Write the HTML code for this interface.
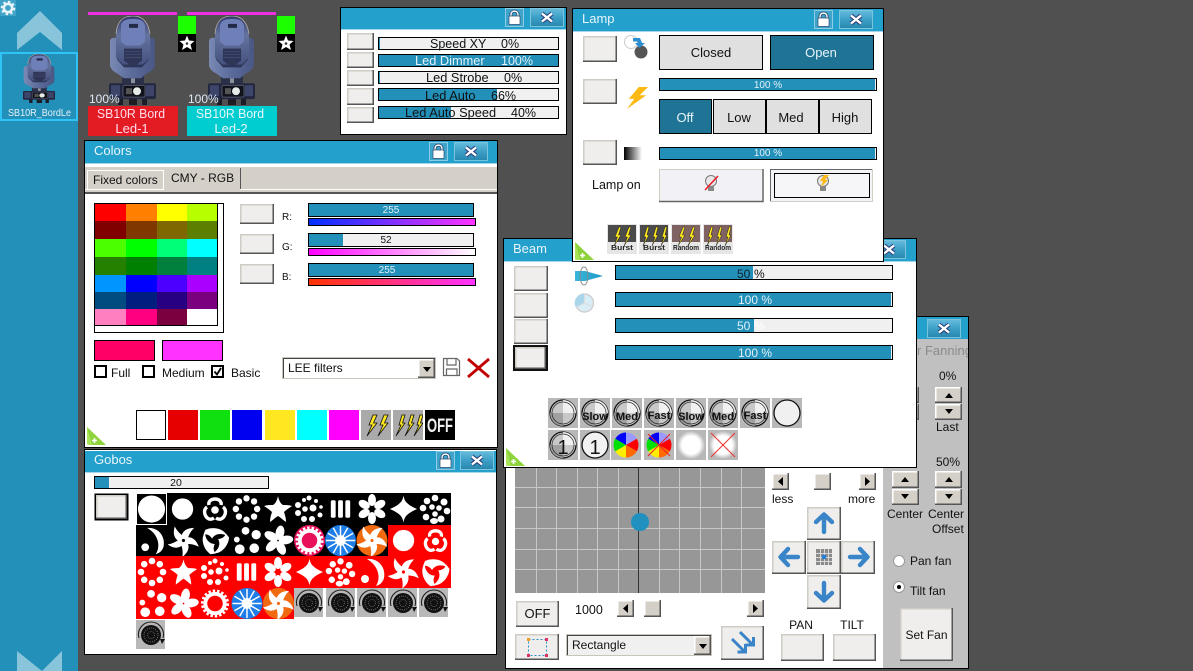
<!DOCTYPE html>
<html><head><meta charset="utf-8"><style>
html,body{margin:0;padding:0;background:#505050}
svg{display:block}
text{font-family:"Liberation Sans",sans-serif;font-size:12px;fill:#111}
rect.e,rect.k,rect.w{shape-rendering:crispEdges}
.k{stroke:#000;fill:#f0f0f0}
.w{stroke:#000;fill:#fff}
.f{fill:#2290b9}
.m{text-anchor:middle}
.t{font-size:13px;fill:#e8f5fb}
.s{font-size:10px}
.l{fill:#e4f1f7}
.bb{font-size:7.500px;font-weight:bold;fill:#222}
.dl{font-weight:bold;font-size:11px}
</style></head><body>
<svg xmlns="http://www.w3.org/2000/svg" width="1193" height="671" viewBox="0 0 1193 671">
<defs>
<linearGradient id="gx" x1="0" y1="0" x2="0" y2="1"><stop offset="0" stop-color="#66bcdc"/><stop offset=".5" stop-color="#3d9fc6"/><stop offset="1" stop-color="#2786ae"/></linearGradient>
<linearGradient id="gh" x1="0" y1="0" x2="0" y2="1"><stop offset="0" stop-color="#333d6c"/><stop offset=".4" stop-color="#64739f"/><stop offset="1" stop-color="#46527f"/></linearGradient>
<linearGradient id="gy" x1="0" y1="0" x2="1" y2="0"><stop offset="0" stop-color="#7a8ab4"/><stop offset=".5" stop-color="#5a6a9a"/><stop offset="1" stop-color="#4a5784"/></linearGradient>
<linearGradient id="gr" x1="0" y1="0" x2="1" y2="0"><stop offset="0" stop-color="#0030ff"/><stop offset="1" stop-color="#ff33ff"/></linearGradient>
<linearGradient id="gg" x1="0" y1="0" x2="1" y2="0"><stop offset="0" stop-color="#ff00ff"/><stop offset="1" stop-color="#ffffff"/></linearGradient>
<linearGradient id="gb" x1="0" y1="0" x2="1" y2="0"><stop offset="0" stop-color="#ff3300"/><stop offset="1" stop-color="#ff33ff"/></linearGradient>
<linearGradient id="gk" x1="0" y1="0" x2="1" y2="0"><stop offset="0" stop-color="#000"/><stop offset="1" stop-color="#fff"/></linearGradient>
<linearGradient id="gc" x1="0" y1="0" x2="1" y2="0"><stop offset="0" stop-color="#38b6d8"/><stop offset="1" stop-color="#1f9ac6"/></linearGradient>
<radialGradient id="gw"><stop offset=".65" stop-color="#fff"/><stop offset="1" stop-color="#b8b8b8"/></radialGradient>

<symbol id="b" viewBox="0 0 100 100" preserveAspectRatio="none"><rect width="100" height="100" fill="#efeeec"/><path d="M100 0H0V100" fill="none" stroke="#cfccc5" stroke-width="3" vector-effect="non-scaling-stroke"/><path d="M100 0V100H0" fill="none" stroke="#555" stroke-width="3" vector-effect="non-scaling-stroke"/></symbol>
<symbol id="c" viewBox="0 0 100 100" preserveAspectRatio="none"><rect width="100" height="100" fill="#d4d0c8"/><path d="M100 0H0V100" fill="none" stroke="#fff" stroke-width="3" vector-effect="non-scaling-stroke"/><path d="M100 0V100H0" fill="none" stroke="#555" stroke-width="3" vector-effect="non-scaling-stroke"/></symbol>

<symbol id="lk" viewBox="0 0 19 19"><rect x=".5" y=".5" width="18" height="18" fill="#3ea4cb" stroke="#8fcbe2"/><path d="M6 9V6.500C6 2 13 2 13 6.500V9" fill="none" stroke="#2c4a70" stroke-width="3"/><path d="M6 9V6.500C6 2 13 2 13 6.500V9" fill="none" stroke="#fff" stroke-width="1.400"/><rect x="4" y="8" width="11" height="8.500" rx="1" fill="#fff" stroke="#2c4a70" stroke-width=".7"/></symbol>
<symbol id="xb" viewBox="0 0 34 19"><rect x=".5" y=".5" width="33" height="18" fill="url(#gx)" stroke="#7cc4de"/><path d="M12 5.500L22 13.500M22 5.500L12 13.500" stroke="#2c3f7c" stroke-width="4.400"/><path d="M12 5.500L22 13.500M22 5.500L12 13.500" stroke="#fff" stroke-width="2.400"/></symbol>

<symbol id="fx" viewBox="0 0 47 90" preserveAspectRatio="none">
<rect x="9" y="83" width="5" height="7" fill="#1a1c28"/><rect x="33" y="83" width="5" height="7" fill="#1a1c28"/><rect x="20" y="84" width="8" height="6" fill="#1c1c22"/>
<rect x="13" y="59" width="22" height="9" fill="#2a3048"/>
<path d="M1 26Q1 22 5 22H41Q46 22 46 26V50Q45 55 38 58L32 63H15L8 58Q2 55 1 50Z" fill="url(#gy)"/>
<path d="M8 24H40V44L33 52H15L8 44Z" fill="#2e3658"/>
<path d="M7 42V18C8 5 14 0 24 0C33 0 39 5 41 18V42L34 49H14Z" fill="url(#gh)"/>
<path d="M7 18C8 5 14 0 24 0C33 0 39 5 41 18" fill="none" stroke="#b5ad9e" stroke-width=".8"/>
<path d="M12 10C13 4 18 3 24 3C30 3 35 4 36 10V26L31 30H17L12 26Z" fill="#6f80b8"/>
<rect x="20" y="8" width="9" height="4" fill="#232a48"/><path d="M15 33H33V45L28 49H20L15 45Z" fill="#2f3556"/>
<path d="M16 36H32M16 39H32M16 42H32" stroke="#434a70"/>
<path d="M22 63H26V68H22Z" fill="#8a8f9c"/>
<rect x="0" y="68" width="47" height="16" rx="2" fill="#232840"/><rect x="2" y="70" width="9" height="11" fill="#3d456a"/><rect x="37" y="70" width="8" height="11" fill="#3d456a"/>
<rect x="14" y="70" width="22" height="12" rx="2" fill="#11131c" stroke="#6a6f84" stroke-width=".7"/><rect x="17" y="73" width="6" height="6" fill="#555"/><circle cx="28" cy="76" r="4" fill="#e6ece8"/>
</symbol>

<symbol id="st" viewBox="0 0 18 18"><rect width="18" height="18" fill="#000"/><path d="M9 1.500L11 6.500L16.500 7L12.500 10.500L14 16L9 13L4 16L5.500 10.500L1.500 7L7 6.500Z" fill="#fff"/><circle cx="9" cy="9.500" r="1.300" fill="#333"/></symbol>

<symbol id="g1" viewBox="0 0 32 32"><circle cx="16" cy="16" r="14" fill="#fff"/></symbol>
<symbol id="g2" viewBox="0 0 32 32"><circle cx="15" cy="16" r="11" fill="#fff"/></symbol>
<symbol id="g3" viewBox="0 0 32 32"><g fill="none" stroke="#fff" stroke-width="3.400"><path d="M10 12C8 4 24 4 22 12M8 14C2 18 8 30 15 25M24 14C30 18 24 30 17 25"/></g><circle cx="16" cy="17" r="3.800" fill="#fff"/></symbol>
<symbol id="g4" viewBox="0 0 32 32"><g fill="#fff"><circle cx="27" cy="16" r="3.300"/><circle cx="23.800" cy="23.800" r="3.300"/><circle cx="16" cy="27" r="3.300"/><circle cx="8.200" cy="23.800" r="3.300"/><circle cx="5" cy="16" r="3.300"/><circle cx="8.200" cy="8.200" r="3.300"/><circle cx="16" cy="5" r="3.300"/><circle cx="23.800" cy="8.200" r="3.300"/></g></symbol>
<symbol id="g5" viewBox="0 0 32 32"><path d="M16 3C17 8 19 11 21 12C24 12 27 12 30 13C27 15 24 17 22 19C23 22 24 25 24 29C21 27 18 24 16 23C14 24 11 27 8 29C8 25 9 22 10 19C8 17 5 15 2 13C5 12 8 12 11 12C13 11 15 8 16 3Z" fill="#fff"/></symbol>
<symbol id="g6" viewBox="0 0 32 32"><g fill="#fff"><circle cx="16" cy="5" r="2.500"/><circle cx="23" cy="8" r="2"/><circle cx="28" cy="14" r="1.800"/><circle cx="27" cy="22" r="2.500"/><circle cx="19" cy="26" r="3"/><circle cx="11" cy="26" r="3"/><circle cx="5" cy="20" r="3"/><circle cx="5" cy="12" r="3"/><circle cx="11" cy="7" r="2"/><circle cx="20" cy="15" r="3.500"/><circle cx="12" cy="16" r="2.800"/></g></symbol>
<symbol id="g7" viewBox="0 0 32 32"><g fill="#fff"><rect x="6" y="7" width="5" height="18" rx="1.500"/><rect x="13.500" y="7" width="5" height="18" rx="1.500"/><rect x="21" y="7" width="5" height="18" rx="1.500"/></g></symbol>
<symbol id="g8" viewBox="0 0 32 32"><g fill="#fff"><ellipse cx="16" cy="7" rx="4" ry="6"/><ellipse cx="16" cy="7" rx="4" ry="6" transform="rotate(60 16 16)"/><ellipse cx="16" cy="7" rx="4" ry="6" transform="rotate(120 16 16)"/><ellipse cx="16" cy="7" rx="4" ry="6" transform="rotate(180 16 16)"/><ellipse cx="16" cy="7" rx="4" ry="6" transform="rotate(240 16 16)"/><ellipse cx="16" cy="7" rx="4" ry="6" transform="rotate(300 16 16)"/></g></symbol>
<symbol id="g9" viewBox="0 0 32 32"><path d="M16 2C17 8 19 11 30 16C19 21 17 24 16 30C15 24 13 21 2 16C13 11 15 8 16 2Z" fill="#fff"/><circle cx="16" cy="16" r="7" fill="#fff"/></symbol>
<symbol id="g10" viewBox="0 0 32 32"><g fill="#fff"><circle cx="16" cy="5" r="3.300"/><circle cx="25" cy="9" r="3.500"/><circle cx="28" cy="18" r="3.300"/><circle cx="22" cy="26" r="3.500"/><ellipse cx="15" cy="28" rx="4" ry="3"/><circle cx="7" cy="24" r="3.300"/><circle cx="4" cy="15" r="3.300"/><circle cx="8" cy="8" r="3.300"/><circle cx="13" cy="14" r="2.800"/><circle cx="20" cy="15" r="2.800"/><circle cx="16" cy="21" r="2.800"/></g></symbol>
<symbol id="g11" viewBox="0 0 32 32"><path d="M11 3C22 2 30 11 28 22C27 26 24 29 20 30C25 22 23 10 11 3Z" fill="#fff"/><circle cx="9" cy="23" r="4" fill="#fff"/></symbol>
<symbol id="g12" viewBox="0 0 32 32"><g fill="#fff"><path id="a5" d="M14 15C13 9 17 3 27 3C23 7 21 11 20 16C18 14 16 14 14 15Z"/><use href="#a5" transform="rotate(72 16 16)"/><use href="#a5" transform="rotate(144 16 16)"/><use href="#a5" transform="rotate(216 16 16)"/><use href="#a5" transform="rotate(288 16 16)"/></g></symbol>
<symbol id="g13" viewBox="0 0 32 32"><g fill="#fff"><path id="a3" d="M6 5C14 1 26 4 28 11C22 8 16 9 13 14C11 11 8 9 4 10Z"/><use href="#a3" transform="rotate(120 16 16)"/><use href="#a3" transform="rotate(240 16 16)"/></g></symbol>
<symbol id="g14" viewBox="0 0 32 32"><g fill="#fff"><circle cx="15" cy="6" r="4"/><circle cx="26" cy="10" r="4.800"/><circle cx="24" cy="24" r="5"/><circle cx="9" cy="25" r="5"/><circle cx="6" cy="15" r="3"/></g></symbol>
<symbol id="g15" viewBox="0 0 32 32"><g fill="#fff"><ellipse id="p5" cx="18" cy="8" rx="4.500" ry="7.500" transform="rotate(10 18 8)"/><use href="#p5" transform="rotate(72 16 16)"/><use href="#p5" transform="rotate(144 16 16)"/><use href="#p5" transform="rotate(216 16 16)"/><use href="#p5" transform="rotate(288 16 16)"/></g></symbol>
<symbol id="g16" viewBox="0 0 32 32"><circle cx="16" cy="16" r="16" fill="#e8105a"/><circle cx="16" cy="16" r="10" fill="none" stroke="#fff" stroke-width="4"/><circle cx="16" cy="16" r="13" fill="none" stroke="#fff" stroke-width="3" stroke-dasharray="2.500 2"/></symbol>
<symbol id="g19" viewBox="0 0 32 32"><circle cx="16" cy="16" r="10" fill="none" stroke="#fff" stroke-width="4"/><circle cx="16" cy="16" r="13" fill="none" stroke="#fff" stroke-width="3" stroke-dasharray="2.500 2"/></symbol>
<symbol id="g17" viewBox="0 0 32 32"><circle cx="16" cy="16" r="16" fill="#1e7de6"/><g stroke="#fff" stroke-width="1.500"><path d="M16 1V31M1 16H31M8.500 3L23.500 29M3 8.500L29 23.500M3 23.500L29 8.500M8.500 29L23.500 3"/></g><circle cx="16" cy="16" r="5.500" fill="#fff"/></symbol>
<symbol id="g18" viewBox="0 0 32 32"><circle cx="16" cy="16" r="16" fill="#f26a10"/><use href="#g12" width="32" height="32"/></symbol>
<symbol id="rt" viewBox="0 0 29 29"><rect width="29" height="29" fill="#b8b8b8"/><circle cx="15" cy="15" r="10" fill="#111"/><circle cx="15" cy="15" r="7" fill="none" stroke="#888" stroke-width=".8" stroke-dasharray="1 1.200"/><circle cx="15" cy="15" r="3.500" fill="none" stroke="#777" stroke-width=".7" stroke-dasharray="1 1"/><path d="M3 18A12.500 12.500 0 1 1 27 18" fill="none" stroke="#222" stroke-width="1.100"/><path d="M24 19H29L26 24Z" fill="#111"/></symbol>

<symbol id="bo" viewBox="0 0 24 24"><path d="M14 0L24 0L15 9L22 9L1 24L9 13L3 13Z" fill="#fdb913"/></symbol>
<symbol id="b2" viewBox="0 0 30 30"><rect width="30" height="30" fill="#aaa"/><g fill="#ffe820" stroke="#111" stroke-width=".8"><path d="M12 5L8 15H11L6 26L16 13H12.500L16 5Z"/><path d="M23 5L19 15H22L17 26L27 13H23.500L27 5Z"/></g></symbol>
<symbol id="b3" viewBox="0 0 30 30"><rect width="30" height="30" fill="#aaa"/><g fill="#ffe820" stroke="#111" stroke-width=".8"><path d="M9 5L6 15H8L3 26L12 13H9.500L12 5Z"/><path d="M18 5L15 15H17L12 26L21 13H18.500L21 5Z"/><path d="M27 5L24 15H26L21 26L30 13H27.500L30 5Z"/></g></symbol>
<symbol id="bs" viewBox="0 0 30 30"><g fill="#ffe820" stroke="#222" stroke-width=".5"><path d="M12 3L8 13H10.500L7 22L14 11H11.500L14 3Z"/><path d="M22 3L18 13H20.500L17 22L24 11H21.500L24 3Z"/></g></symbol>
<symbol id="bt" viewBox="0 0 30 30"><g fill="#ffe820" stroke="#222" stroke-width=".5"><path d="M8 3L5 13H7L4 22L10 11H8L10 3Z"/><path d="M17 3L14 13H16L13 22L19 11H17L19 3Z"/><path d="M26 3L23 13H25L22 22L28 11H26L28 3Z"/></g></symbol>
<symbol id="tr" viewBox="0 0 19 18"><path d="M0 0L19 18H2Q0 18 0 16Z" fill="#8ed33c"/><path d="M0 0L5 18H2Q0 18 0 16Z" fill="#a9e35a"/><path d="M5 13.500H10M7.500 11V16" stroke="#fff" stroke-width="1.600"/></symbol>
<symbol id="wh" viewBox="0 0 30 30"><rect width="30" height="30" fill="#b8b8b8"/><path d="M15 15V2.500A12.500 12.500 0 0 0 4.200 8.750Z" fill="#0000ff"/><path d="M15 15V2.500A12.500 12.500 0 0 1 25.800 8.750Z" fill="#9999ff"/><path d="M15 15L25.800 8.750A12.500 12.500 0 0 1 25.800 21.250Z" fill="#ff0000"/><path d="M15 15L25.800 21.250A12.500 12.500 0 0 1 15 27.500Z" fill="#ff6a00"/><path d="M15 15V27.500A12.500 12.500 0 0 1 4.200 21.250Z" fill="#ffee00"/><path d="M15 15L4.200 21.250A12.500 12.500 0 0 1 4.200 8.750Z" fill="#00e000"/></symbol>
<symbol id="di" viewBox="0 0 30 30"><rect width="30" height="30" fill="#b8b8b8"/><circle cx="15" cy="15" r="13" fill="#c8c8c8" stroke="#111" stroke-width="1.300"/><path d="M15 15V2A13 13 0 0 1 28 15Z" fill="#f0f0f0"/><path d="M15 15H2A13 13 0 0 0 15 28Z" fill="#a0a0a0"/><circle cx="15" cy="15" r="11" fill="none" stroke="#222" stroke-width=".7"/></symbol>
</defs>

<rect class="e" width="1193" height="671" fill="#505050"/>
<!-- sidebar -->
<rect class="e" width="78" height="671" fill="#2290b9"/>
<rect class="e" width="16" height="16" fill="#41a3c8"/>
<circle cx="8" cy="8" r="4.200" fill="none" stroke="#e8f4f9" stroke-width="2.600"/><circle cx="8" cy="8" r="6.300" fill="none" stroke="#e8f4f9" stroke-width="2" stroke-dasharray="2.400 2.500"/>
<path d="M17 33L40 11L62 33V50L40 32L17 50Z" fill="#88c4da"/>
<path d="M17 651L42 671H17ZM62 651V671H42Z" fill="#88c4da"/>
<rect x="1" y="53" width="76" height="67" fill="#2290b9" stroke="#2fc3f6" stroke-width="2"/>
<use href="#fx" x="23" y="54" width="32" height="49"/>
<text x="8" y="116" textLength="63" lengthAdjust="spacingAndGlyphs" style="font-size:10px;fill:#e6f2f7">SB10R_BordLe</text>

<!-- fixtures -->
<rect class="e" x="88" y="12" width="89" height="3" fill="#f030e0"/>
<rect class="e" x="187" y="12" width="89" height="3" fill="#f030e0"/>
<use href="#fx" x="109" y="16" width="47" height="89"/>
<use href="#fx" x="208" y="16" width="47" height="89"/>
<rect class="e" x="178" y="16" width="18" height="18" fill="#1cff00"/><use href="#st" x="178" y="34" width="18" height="18"/>
<rect class="e" x="277" y="16" width="18" height="18" fill="#1cff00"/><use href="#st" x="277" y="34" width="18" height="18"/>
<text x="89" y="103" style="fill:#dce8f6">100%</text><text x="188" y="103" style="fill:#dce8f6">100%</text>
<rect class="e" x="88" y="106" width="90" height="30" fill="#e31b23"/>
<rect class="e" x="187" y="106" width="90" height="30" fill="#00cdd0"/>
<text x="97" y="118" textLength="68" lengthAdjust="spacingAndGlyphs" class="t" style="fill:#fde">SB10R Bord</text><text x="132" y="133" class="t m" style="fill:#fde">Led-1</text><text x="196" y="118" textLength="68" lengthAdjust="spacingAndGlyphs" class="t">SB10R Bord</text><text x="231" y="133" class="t m">Led-2</text>

<!-- speed window -->
<rect class="w" x="340.500" y="7.500" width="226" height="127"/>
<rect class="e" x="341" y="8" width="225" height="21" fill="#24a0cc"/><rect class="e" x="341" y="29" width="225" height="1" fill="#a3d6ea"/>
<use href="#lk" x="505" y="8" width="19" height="19"/><use href="#xb" x="530" y="8" width="34" height="19"/>
<use href="#b" x="347" y="33" width="27" height="17"/><use href="#b" x="347" y="52" width="27" height="16"/><use href="#b" x="347" y="70" width="27" height="16"/><use href="#b" x="347" y="88" width="27" height="17"/><use href="#b" x="347" y="107" width="27" height="16"/>
<rect class="k" x="378.500" y="37.500" width="180" height="12"/><rect class="e f" x="379" y="38" width="1" height="11"/><text x="430" y="48" style="font-size:12.500px">Speed XY</text><text x="501" y="48" style="font-size:12.500px">0%</text>
<rect class="k" x="378.500" y="54.500" width="180" height="12"/><rect class="e f" x="379" y="55" width="179" height="11"/><text x="415" y="65" class="l" style="font-size:12.800px">Led Dimmer</text><text x="501" y="65" class="l" style="font-size:12.500px">100%</text>
<rect class="k" x="378.500" y="71.500" width="180" height="12"/><rect class="e f" x="379" y="72" width="1" height="11"/><text x="426" y="82" style="font-size:12.800px">Led Strobe</text><text x="504" y="82" style="font-size:12.500px">0%</text>
<rect class="k" x="378.500" y="88.500" width="180" height="12"/><rect class="e f" x="379" y="89" width="118" height="11"/><text x="425" y="100" style="font-size:12.800px">Led Auto</text><text x="491" y="100" style="font-size:12.500px">66%</text>
<rect class="k" x="378.500" y="106.500" width="180" height="12"/><rect class="e f" x="379" y="107" width="72" height="11"/><text x="405" y="117" style="font-size:12.800px">Led Auto Speed</text><text x="511" y="117" style="font-size:12.500px">40%</text>

<!-- colors window -->
<rect class="w" x="84.500" y="140.500" width="413" height="307"/>
<rect class="e" x="85" y="141" width="412" height="22" fill="#24a0cc"/><rect class="e" x="85" y="163" width="412" height="1" fill="#a3d6ea"/>
<text x="94" y="155" class="t">Colors</text>
<use href="#lk" x="429" y="142" width="19" height="19"/><use href="#xb" x="454" y="142" width="34" height="19"/>
<rect class="e" x="85" y="167" width="412" height="25" fill="#d4d0c8"/><rect class="e" x="85" y="189" width="412" height="1" fill="#fff"/><rect class="e" x="85" y="192" width="412" height="2" fill="#555"/>
<rect x="87.500" y="170.500" width="76" height="19" fill="#d4d0c8" stroke="#fff" class="e"/>
<text x="93" y="184">Fixed colors</text>
<rect class="e" x="164" y="167" width="76" height="23" fill="#d4d0c8"/><rect class="e" x="240" y="168" width="1" height="21" fill="#555"/>
<text x="171" y="182">CMY - RGB</text>
<rect class="w" x="94.500" y="203.500" width="129" height="129"/>
<rect class="e" x="95" y="204" width="31" height="17" fill="#ff0000"/><rect class="e" x="126" y="204" width="31" height="17" fill="#ff8000"/><rect class="e" x="157" y="204" width="30" height="17" fill="#ffff00"/><rect class="e" x="187" y="204" width="30" height="17" fill="#b7ff00"/>
<rect class="e" x="95" y="221" width="31" height="18" fill="#800000"/><rect class="e" x="126" y="221" width="31" height="18" fill="#803800"/><rect class="e" x="157" y="221" width="30" height="18" fill="#806800"/><rect class="e" x="187" y="221" width="30" height="18" fill="#5c7f00"/>
<rect class="e" x="95" y="239" width="31" height="18" fill="#4cff00"/><rect class="e" x="126" y="239" width="31" height="18" fill="#00ff00"/><rect class="e" x="157" y="239" width="30" height="18" fill="#00ff78"/><rect class="e" x="187" y="239" width="30" height="18" fill="#00ffff"/>
<rect class="e" x="95" y="257" width="31" height="18" fill="#268000"/><rect class="e" x="126" y="257" width="31" height="18" fill="#008000"/><rect class="e" x="157" y="257" width="30" height="18" fill="#00803c"/><rect class="e" x="187" y="257" width="30" height="18" fill="#008080"/>
<rect class="e" x="95" y="275" width="31" height="17" fill="#0095ff"/><rect class="e" x="126" y="275" width="31" height="17" fill="#0000ff"/><rect class="e" x="157" y="275" width="30" height="17" fill="#4c00ff"/><rect class="e" x="187" y="275" width="30" height="17" fill="#aa00ff"/>
<rect class="e" x="95" y="292" width="31" height="17" fill="#004b80"/><rect class="e" x="126" y="292" width="31" height="17" fill="#001e80"/><rect class="e" x="157" y="292" width="30" height="17" fill="#260080"/><rect class="e" x="187" y="292" width="30" height="17" fill="#7a0080"/>
<rect class="e" x="95" y="309" width="31" height="16" fill="#ff80c0"/><rect class="e" x="126" y="309" width="31" height="16" fill="#ff0080"/><rect class="e" x="157" y="309" width="30" height="16" fill="#7a0040"/><rect class="e" x="187" y="309" width="30" height="16" fill="#ffffff"/>
<rect class="e" x="217" y="204" width="1" height="122" fill="#000"/><rect class="e" x="95" y="325" width="123" height="1" fill="#000"/>
<use href="#b" x="240" y="204" width="34" height="20"/><use href="#b" x="240" y="234" width="34" height="20"/><use href="#b" x="240" y="264" width="34" height="20"/>
<text x="282" y="220" class="s">R:</text><text x="282" y="250" class="s">G:</text><text x="282" y="280" class="s">B:</text>
<rect class="k" x="308.500" y="203.500" width="165" height="13"/><rect class="e f" x="309" y="204" width="164" height="12"/><text x="391" y="213" class="s m l">255</text>
<rect class="k" x="308.500" y="233.500" width="165" height="13"/><rect class="e f" x="309" y="234" width="34" height="12"/><text x="386" y="243" class="s m">52</text>
<rect class="k" x="308.500" y="263.500" width="165" height="13"/><rect class="e f" x="309" y="264" width="164" height="12"/><text x="387" y="273" class="s m l">255</text>
<rect class="e" x="308.500" y="218.500" width="167" height="7" fill="url(#gr)" stroke="#000"/>
<rect class="e" x="308.500" y="248.500" width="167" height="7" fill="url(#gg)" stroke="#000"/>
<rect class="e" x="308.500" y="278.500" width="167" height="7" fill="url(#gb)" stroke="#000"/>
<rect class="e" x="94.500" y="340.500" width="60" height="20" fill="#ff0066" stroke="#000"/>
<rect class="e" x="162.500" y="340.500" width="60" height="20" fill="#ff33ff" stroke="#000"/>
<rect x="95" y="366" width="11" height="11" fill="#fff" stroke="#000" stroke-width="2" class="e"/><text x="111" y="377">Full</text>
<rect x="143" y="366" width="11" height="11" fill="#fff" stroke="#000" stroke-width="2" class="e"/><text x="162" y="377">Medium</text>
<rect x="212" y="366" width="11" height="11" fill="#fff" stroke="#000" stroke-width="2" class="e"/><path d="M214.500 371.500L217 374.500L221 368" fill="none" stroke="#000" stroke-width="1.800"/><text x="231" y="377">Basic</text>
<rect class="e" x="282.500" y="357.500" width="153" height="21" fill="#fff" stroke="#c8c5bd"/><rect class="e" x="283" y="358" width="152" height="1" fill="#444"/><rect class="e" x="283" y="358" width="1" height="20" fill="#444"/>
<text x="288" y="372">LEE filters</text>
<use href="#c" x="418" y="359" width="17" height="19"/><path d="M423 367H431L427 372Z" fill="#000"/>
<g fill="none" stroke="#666" stroke-width="1.200"><path d="M443.500 358.500H457L459.500 361V375.500H443.500Z"/><path d="M447 358.500V365H456V358.500M446.500 375.500V369H457V375.500"/></g>
<path d="M468 359L489 377M489 359L468 377" stroke="#c00000" stroke-width="2.800"/>
<rect class="e" x="136.500" y="410.500" width="29" height="29" fill="#fff" stroke="#000"/>
<rect class="e" x="168" y="410" width="30" height="30" fill="#e60000"/>
<rect class="e" x="200" y="410" width="30" height="30" fill="#10e010"/>
<rect class="e" x="232" y="410" width="30" height="30" fill="#0000f0"/>
<rect class="e" x="265" y="410" width="30" height="30" fill="#ffe722"/>
<rect class="e" x="297" y="410" width="30" height="30" fill="#00ffff"/>
<rect class="e" x="329" y="410" width="30" height="30" fill="#ff00ff"/>
<use href="#b2" x="361" y="410" width="30" height="30"/><use href="#b3" x="393" y="410" width="30" height="30"/>
<rect class="e" x="425" y="410" width="30" height="30" fill="#000"/>
<text x="427" y="432" textLength="26" lengthAdjust="spacingAndGlyphs" style="font-size:19px;font-weight:bold;fill:#eee">OFF</text>
<use href="#tr" x="87" y="427" width="19" height="18"/>

<!-- gobos window -->
<rect class="w" x="84.500" y="449.500" width="412" height="205"/>
<rect class="e" x="85" y="451" width="411" height="21" fill="#24a0cc"/><rect class="e" x="85" y="472" width="411" height="1" fill="#a3d6ea"/>
<text x="94" y="464" class="t">Gobos</text>
<use href="#lk" x="436" y="451" width="19" height="19"/><use href="#xb" x="460" y="451" width="34" height="19"/>
<rect class="k" x="94.500" y="476.500" width="174" height="12"/><rect class="e f" x="95" y="477" width="14" height="11"/><text x="176" y="486" class="m" style="font-size:10.500px">20</text>
<rect x="94.500" y="493.500" width="34" height="27" fill="#000" class="e"/><use href="#b" x="96" y="495" width="31" height="24"/>
<rect class="e" x="136" y="493" width="315" height="32" fill="#000"/>
<rect class="e" x="136" y="525" width="252" height="31" fill="#000"/><rect class="e" x="388" y="525" width="63" height="31" fill="#f00"/>
<rect class="e" x="136" y="556" width="315" height="32" fill="#f00"/>
<rect class="e" x="136" y="588" width="158" height="31" fill="#f00"/>
<use href="#g1" x="136" y="493" width="31" height="32"/><rect class="e" x="136.500" y="493.500" width="30" height="31" fill="none" stroke="#fff"/>
<use href="#g2" x="168" y="493" width="31" height="32"/><use href="#g3" x="199" y="493" width="32" height="32"/><use href="#g4" x="231" y="493" width="31" height="32"/><use href="#g5" x="262" y="493" width="32" height="32"/><use href="#g6" x="293" y="493" width="32" height="32"/><use href="#g7" x="325" y="493" width="31" height="32"/><use href="#g8" x="356" y="493" width="32" height="32"/><use href="#g9" x="388" y="493" width="31" height="32"/><use href="#g10" x="419" y="493" width="32" height="32"/>
<use href="#g11" x="136" y="525" width="32" height="31"/><use href="#g12" x="168" y="525" width="31" height="31"/><use href="#g13" x="199" y="525" width="32" height="31"/><use href="#g14" x="231" y="525" width="31" height="31"/><use href="#g15" x="262" y="525" width="32" height="31"/><use href="#g16" x="294" y="525" width="31" height="31"/><use href="#g17" x="325" y="525" width="31" height="31"/><use href="#g18" x="356" y="525" width="32" height="31"/><use href="#g2" x="389" y="525" width="31" height="31"/><use href="#g3" x="420" y="525" width="31" height="31"/>
<use href="#g4" x="136" y="556" width="32" height="32"/><use href="#g5" x="168" y="556" width="31" height="32"/><use href="#g6" x="199" y="556" width="32" height="32"/><use href="#g7" x="231" y="556" width="31" height="32"/><use href="#g8" x="262" y="556" width="32" height="32"/><use href="#g9" x="294" y="556" width="31" height="32"/><use href="#g10" x="325" y="556" width="31" height="32"/><use href="#g11" x="356" y="556" width="32" height="32"/><use href="#g12" x="388" y="556" width="31" height="32"/><use href="#g13" x="419" y="556" width="32" height="32"/>
<use href="#g14" x="136" y="588" width="32" height="31"/><use href="#g15" x="168" y="588" width="31" height="31"/><use href="#g19" x="199" y="588" width="32" height="31"/><use href="#g17" x="231" y="588" width="32" height="31"/><use href="#g18" x="263" y="588" width="31" height="31"/>
<use href="#rt" x="294" y="588" width="29" height="29"/><use href="#rt" x="326" y="588" width="29" height="29"/><use href="#rt" x="357" y="588" width="29" height="29"/><use href="#rt" x="388" y="588" width="29" height="29"/><use href="#rt" x="419" y="588" width="29" height="29"/><use href="#rt" x="136" y="620" width="29" height="29"/>

<!-- position window -->
<rect class="w" x="505.500" y="316.500" width="463" height="352"/>
<rect class="e" x="506" y="317" width="462" height="22" fill="#24a0cc"/>
<rect class="e" x="883" y="339" width="85" height="329" fill="#c0c0c0"/>
<use href="#xb" x="927" y="319" width="34" height="19"/>
<text x="917" y="355" style="font-size:13px;fill:#8a8a8a">r Fanning</text>
<rect class="e" x="969" y="342" width="6" height="18" fill="#505050"/><rect class="e" x="968" y="340" width="1" height="22" fill="#000"/>
<text x="939" y="380">0%</text>
<use href="#c" x="891" y="387" width="28" height="16"/><use href="#c" x="891" y="404" width="28" height="16"/>
<use href="#c" x="935" y="387" width="27" height="16"/><path d="M945 398H953L949 393Z" fill="#000"/>
<use href="#c" x="935" y="404" width="27" height="16"/><path d="M945 409H953L949 414Z" fill="#000"/>
<text x="936" y="431">Last</text><text x="936" y="466">50%</text>
<use href="#c" x="892" y="471" width="27" height="17"/><path d="M901 482H909L905 477Z" fill="#000"/>
<use href="#c" x="892" y="489" width="27" height="16"/><path d="M901 494H909L905 499Z" fill="#000"/>
<use href="#c" x="935" y="471" width="27" height="17"/><path d="M945 482H953L949 477Z" fill="#000"/>
<use href="#c" x="935" y="489" width="27" height="16"/><path d="M945 494H953L949 499Z" fill="#000"/>
<text x="887" y="518">Center</text><text x="928" y="518">Center</text><text x="932" y="533">Offset</text>
<circle cx="899" cy="561" r="5.500" fill="#fff" stroke="#999"/><text x="910" y="565">Pan fan</text>
<circle cx="899" cy="587" r="5.500" fill="#fff" stroke="#999"/><circle cx="899" cy="587" r="2" fill="#000"/><text x="910" y="595">Tilt fan</text>
<use href="#b" x="900" y="608" width="53" height="53"/><text x="926.500" y="639" class="m">Set Fan</text>
<rect class="e" x="515" y="468" width="250" height="125" fill="#979797"/>
<path d="M536.500 468V593M556.500 468V593M577.500 468V593M597.500 468V593M618.500 468V593M659.500 468V593M679.500 468V593M700.500 468V593M721.500 468V593M741.500 468V593M515 487.500H765M515 507.500H765M515 528.500H765M515 549.500H765M515 569.500H765" stroke="#c8c8c8" shape-rendering="crispEdges"/>
<path d="M638.500 468V593" stroke="#333" shape-rendering="crispEdges"/>
<circle cx="640" cy="522" r="9" fill="#2090bf"/>
<use href="#b" x="516" y="601" width="43" height="26"/><text x="537.500" y="618" class="m" style="font-size:13px">OFF</text>
<text x="575" y="614" style="font-size:12.500px">1000</text>
<use href="#c" x="617" y="600" width="17" height="17"/><path d="M628 604V613L623 608.500Z" fill="#000"/>
<use href="#c" x="644" y="600" width="17" height="17"/>
<use href="#c" x="747" y="600" width="17" height="17"/><path d="M753 604V613L758 608.500Z" fill="#000"/>
<use href="#b" x="515" y="634" width="44" height="26"/>
<rect x="528.500" y="639.500" width="18" height="16" fill="none" stroke="#2a90c8" stroke-dasharray="2 2"/><g fill="#e03060"><rect class="e" x="545" y="638" width="3" height="3"/><rect class="e" x="527" y="654" width="3" height="3"/><rect class="e" x="545" y="654" width="3" height="3"/></g><rect class="e" x="527" y="638" width="3" height="3" fill="#f0a020"/>
<rect class="e" x="566.500" y="634.500" width="145" height="21" fill="#f0f0f0" stroke="#c8c5bd"/><rect class="e" x="567" y="635" width="144" height="1" fill="#444"/><rect class="e" x="567" y="635" width="1" height="20" fill="#444"/>
<text x="572" y="649">Rectangle</text>
<use href="#c" x="694" y="636" width="17" height="19"/><path d="M699 644H707L703 649Z" fill="#000"/>
<use href="#b" x="721" y="626" width="43" height="34"/>
<g fill="none" stroke="#3a84c8" stroke-width="3" stroke-linecap="butt" stroke-linejoin="miter"><path d="M740 632L752 644M745.500 645H753.500V637"/><path d="M732 639L744 651M737.500 652H745.500V644"/></g>
<use href="#c" x="772" y="473" width="17" height="17"/><path d="M783 477V486L778 481.500Z" fill="#000"/>
<use href="#c" x="814" y="473" width="17" height="17"/>
<use href="#c" x="859" y="473" width="17" height="17"/><path d="M865 477V486L870 481.500Z" fill="#000"/>
<text x="772" y="503">less</text><text x="848" y="503">more</text>
<use href="#b" x="807" y="507" width="34" height="33"/><use href="#b" x="772" y="541" width="34" height="33"/><use href="#b" x="807" y="541" width="34" height="33"/><use href="#b" x="841" y="541" width="34" height="33"/><use href="#b" x="807" y="575" width="34" height="34"/>
<g fill="none" stroke="#3a84c8" stroke-width="4.400" stroke-linecap="round" stroke-linejoin="round"><path d="M824 532V515M816 522L824 514.500L832 522"/><path d="M798 557H781M788 549L780.500 557L788 565"/><path d="M850 557H867M860 549L867.500 557L860 565"/><path d="M824 583V600M816 593L824 600.500L832 593"/></g>
<rect class="e" x="816" y="549" width="16" height="16" fill="#8a8a8a"/><path d="M820.500 549V565M824.500 549V565M828.500 549V565M816 553.500H832M816 557.500H832M816 561.500H832" stroke="#d8d8d8" shape-rendering="crispEdges"/><circle cx="824" cy="557" r="2.200" fill="#1a80e0"/>
<text x="801" y="629" class="m">PAN</text><text x="852" y="629" class="m">TILT</text>
<use href="#b" x="781" y="634" width="43" height="27"/><use href="#b" x="833" y="634" width="43" height="27"/>

<!-- beam window -->
<rect class="w" x="503.500" y="238.500" width="413" height="229"/>
<rect class="e" x="504" y="239" width="412" height="22" fill="#24a0cc"/><rect class="e" x="504" y="261" width="412" height="1" fill="#a3d6ea"/>
<text x="513" y="253" class="t">Beam</text>
<use href="#xb" x="872" y="240" width="34" height="19"/>
<use href="#b" x="514" y="266" width="34" height="25"/><use href="#b" x="514" y="293" width="34" height="25"/><use href="#b" x="514" y="319" width="34" height="25"/>
<rect class="e" x="513" y="345" width="35" height="26" fill="#111"/><use href="#b" x="515" y="347" width="31" height="22"/>
<path d="M575 271H585L603 276L585 281H575Z" fill="url(#gc)"/><ellipse cx="584" cy="276" rx="4" ry="9" fill="none" stroke="#888" stroke-width=".9"/>
<circle cx="584.500" cy="303" r="9" fill="#d9edf7" stroke="#cfcfcf" stroke-width="1.400"/><path d="M584.500 303V294A9 9 0 0 0 576 307.500Z" fill="#a9d6ea"/><path d="M584.500 294V303L593 307M584.500 303L576 307.500" stroke="#ddd" fill="none"/>
<rect class="k" x="615.500" y="265.500" width="277" height="14"/><rect class="e f" x="616" y="266" width="137" height="13"/><text x="737" y="278" style="fill:#10202a">50</text><text x="754" y="278">%</text>
<rect class="k" x="615.500" y="292.500" width="277" height="14"/><rect class="e f" x="616" y="293" width="275" height="13"/><text x="755" y="304" class="m l">100 %</text>
<rect class="k" x="615.500" y="318.500" width="277" height="14"/><rect class="e f" x="616" y="319" width="138" height="13"/><text x="737" y="330" class="l">50</text><text x="754" y="330" style="fill:#fff">%</text>
<rect class="k" x="615.500" y="345.500" width="277" height="14"/><rect class="e f" x="616" y="346" width="275" height="13"/><text x="755" y="357" class="m l">100 %</text>
<use href="#di" x="548" y="398" width="30" height="30"/>
<use href="#di" x="580" y="398" width="30" height="30"/><text x="595" y="420" class="m dl">Slow</text>
<use href="#di" x="612" y="398" width="30" height="30"/><text x="627" y="420" class="m dl">Med</text>
<use href="#di" x="644" y="398" width="30" height="30"/><text x="659" y="419" class="m dl">Fast</text>
<use href="#di" x="676" y="398" width="30" height="30"/><text x="691" y="420" class="m dl">Slow</text>
<use href="#di" x="708" y="398" width="30" height="30"/><text x="723" y="420" class="m dl">Med</text>
<use href="#di" x="740" y="398" width="30" height="30"/><text x="755" y="419" class="m dl">Fast</text>
<rect class="e" x="772" y="398" width="30" height="30" fill="#b8b8b8"/><circle cx="787" cy="413" r="13" fill="#f0f0f0" stroke="#111" stroke-width="1.300"/>
<use href="#di" x="548" y="430" width="30" height="30"/><text x="563" y="454" class="m" style="font-size:20px">1</text>
<rect class="e" x="580" y="430" width="30" height="30" fill="#b8b8b8"/><circle cx="595" cy="445" r="13" fill="#f2f2f2" stroke="#111" stroke-width="1.300"/><text x="595" y="454" class="m" style="font-size:20px">1</text>
<use href="#wh" x="611" y="430" width="30" height="30"/>
<use href="#wh" x="644" y="430" width="30" height="30"/><path d="M648 434L670 456M670 434L648 456" stroke="#f02020" stroke-width="1"/>
<rect class="e" x="676" y="430" width="30" height="30" fill="#b8b8b8"/><circle cx="691" cy="445" r="14" fill="url(#gw)"/>
<rect class="e" x="708" y="430" width="30" height="30" fill="#b8b8b8"/><circle cx="723" cy="445" r="14" fill="url(#gw)"/><path d="M711 433L735 457M735 433L711 457" stroke="#f03030" stroke-width="1"/>
<use href="#tr" x="506" y="448" width="19" height="18"/>

<!-- lamp window -->
<rect class="w" x="572.500" y="8.500" width="311" height="253"/>
<rect class="e" x="573" y="9" width="310" height="22" fill="#24a0cc"/><rect class="e" x="573" y="31" width="310" height="1" fill="#a3d6ea"/>
<text x="582" y="23" class="t">Lamp</text>
<use href="#lk" x="814" y="10" width="19" height="19"/><use href="#xb" x="839" y="10" width="34" height="19"/>
<use href="#b" x="583" y="36" width="34" height="26"/>
<circle cx="631" cy="42" r="6.500" fill="#fff" stroke="#ccc"/><circle cx="641" cy="52" r="6.500" fill="#555"/><path d="M633 38H640L642 43H645L639.500 48L635 43H638L637 41.500H633Z" fill="#2c8fd0"/>
<rect class="e" x="659.500" y="35.500" width="103" height="34" fill="#e0e0e0" stroke="#000"/><text x="711" y="57" class="m" style="font-size:13px">Closed</text>
<rect class="e" x="770.500" y="35.500" width="103" height="34" fill="#1f7496" stroke="#000"/><text x="821" y="57" class="m" style="font-size:13px;fill:#e8f4f9">Open</text>
<rect class="k" x="659.500" y="78.500" width="217" height="12"/><rect class="e f" x="660" y="79" width="215" height="11"/><text x="768" y="88" class="s m l">100 %</text>
<use href="#b" x="583" y="79" width="34" height="25"/>
<use href="#bo" x="626" y="86" width="22" height="24"/>
<rect class="e" x="659.500" y="99.500" width="52" height="34" fill="#1f7496" stroke="#000"/><text x="685" y="122" class="m" style="font-size:13px;fill:#e8f4f9">Off</text>
<rect class="e" x="713.500" y="99.500" width="52" height="34" fill="#e0e0e0" stroke="#000"/><text x="739" y="122" class="m" style="font-size:13px">Low</text>
<rect class="e" x="766.500" y="99.500" width="52" height="34" fill="#e0e0e0" stroke="#000"/><text x="791" y="122" class="m" style="font-size:13px">Med</text>
<rect class="e" x="819.500" y="99.500" width="52" height="34" fill="#e0e0e0" stroke="#000"/><text x="845" y="122" class="m" style="font-size:13px">High</text>
<use href="#b" x="583" y="140" width="34" height="25"/>
<rect class="e" x="624" y="147" width="18" height="13" fill="url(#gk)"/>
<rect class="k" x="659.500" y="147.500" width="217" height="12"/><rect class="e f" x="660" y="148" width="215" height="11"/><text x="768" y="156" class="s m l">100 %</text>
<text x="592" y="189" style="font-size:12.500px">Lamp on</text>
<rect class="e" x="659" y="169" width="104" height="33" fill="#f2f2f6"/><path d="M659.500 202V169.500H762.500" fill="none" stroke="#d0cdc5"/><path d="M763 169V201.500H659" fill="none" stroke="#666" stroke-width="1.500"/>
<rect class="e" x="770" y="169" width="103" height="33" fill="#f4f4f8"/><path d="M770.500 202V169.500H872.500" fill="none" stroke="#666"/><path d="M872.500 169V201.500H770" fill="none" stroke="#d0cdc5"/>
<rect class="e" x="774.500" y="173.500" width="95" height="24" fill="#f6f6f8" stroke="#000"/>
<circle cx="711" cy="181" r="5.500" fill="#e8e8e8" stroke="#777"/><rect class="e" x="708" y="186" width="6" height="5" fill="#888"/><path d="M705 190L718 176" stroke="#f01020" stroke-width="1.400"/>
<circle cx="823" cy="181" r="5.500" fill="#e8e8e8" stroke="#777"/><rect class="e" x="820" y="186" width="6" height="5" fill="#888"/><path d="M824 175L829 175L825 180L828 180L821 187L823 181L820 181Z" fill="#fdb913"/>
<rect class="e" x="607" y="224" width="30" height="30" fill="#e6e6e6"/><rect class="e" x="608" y="225" width="28" height="17" fill="#4b4b4b"/><use href="#bs" x="607" y="224" width="30" height="30"/><text x="611" y="250" textLength="22" lengthAdjust="spacingAndGlyphs" class="bb">Burst</text>
<rect class="e" x="639" y="224" width="30" height="30" fill="#e6e6e6"/><rect class="e" x="640" y="225" width="28" height="17" fill="#4b4b4b"/><use href="#bt" x="639" y="224" width="30" height="30"/><text x="643" y="250" textLength="22" lengthAdjust="spacingAndGlyphs" class="bb">Burst</text>
<rect class="e" x="671" y="224" width="30" height="30" fill="#e6e6e6"/><rect class="e" x="672" y="225" width="28" height="17" fill="#7f6363"/><use href="#bs" x="671" y="224" width="30" height="30"/><text x="673" y="250" textLength="26" lengthAdjust="spacingAndGlyphs" class="bb">Random</text>
<rect class="e" x="703" y="224" width="30" height="30" fill="#e6e6e6"/><rect class="e" x="704" y="225" width="28" height="17" fill="#7f6363"/><use href="#bt" x="703" y="224" width="30" height="30"/><text x="705" y="250" textLength="26" lengthAdjust="spacingAndGlyphs" class="bb">Random</text>
<use href="#tr" x="575" y="242" width="19" height="18"/>
</svg>
</body></html>
